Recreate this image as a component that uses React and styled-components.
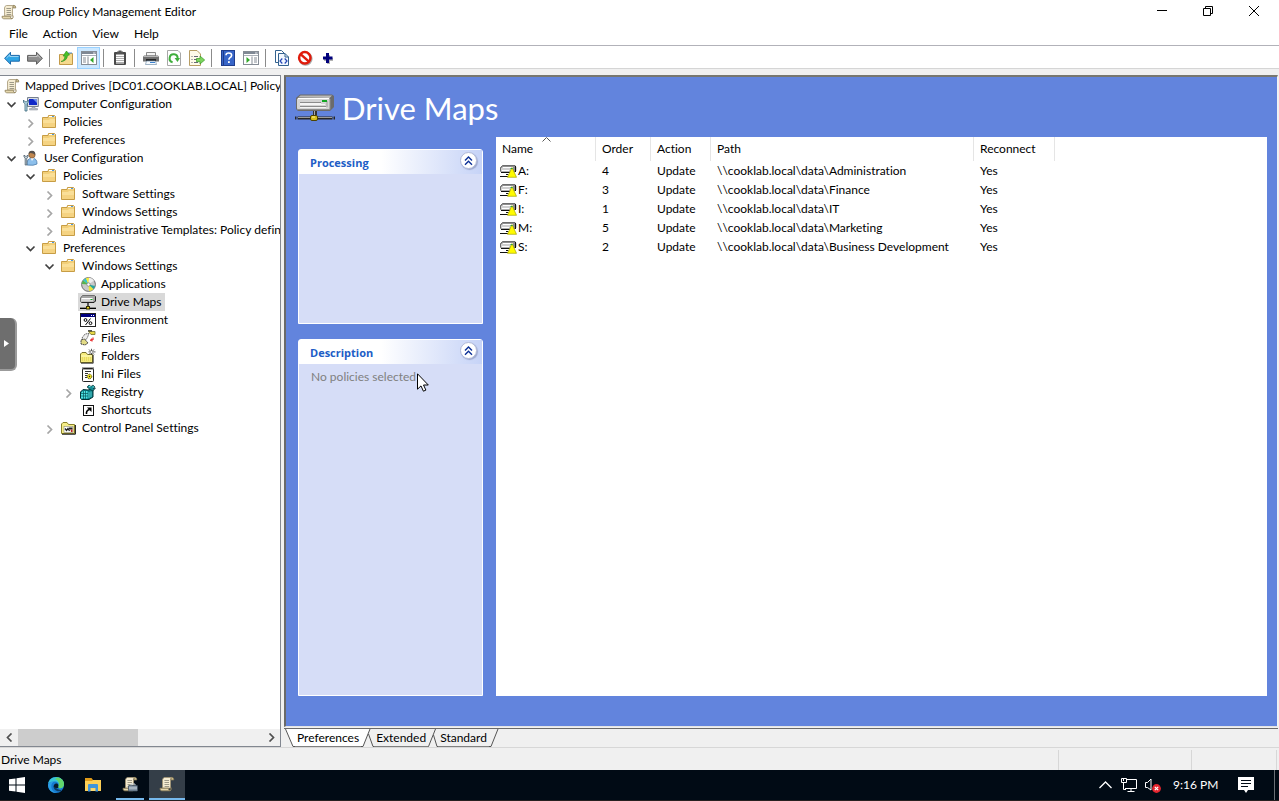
import React from "react";
import styled, { createGlobalStyle, css } from "styled-components";

const GlobalStyle = createGlobalStyle`
  *, *::before, *::after { box-sizing: border-box; }
  html, body, #root { height: 100%; margin: 0; }
  body {
    overflow: hidden;
    background: #fff;
    color: #000;
    font: 12px/18px Lato, "Open Sans", sans-serif;
    font-variant-ligatures: none;
  }
  button { font: inherit; font-variant-ligatures: none; color: inherit; border: 0; padding: 0; margin: 0; background: none; }
  svg { display: block; flex: none; }
  ul { list-style: none; margin: 0; padding: 0; }
`;

/* ---------- icons ---------- */

const Svg = ({ size = 16, w, h, box, children }) => (
  <svg width={w || size} height={h || size} viewBox={box || "0 0 16 16"} fill="none" aria-hidden="true">
    {children}
  </svg>
);

const ScrollShapes = () => (
  <>
    <path d="M5.5 1.5Q3.5 2 3.5 4L3.6 12H11.5V3.5Q11.6 2 13 1.5Z" fill="#f5ecd2" stroke="#a39674" strokeWidth=".8" />
    <path d="M12.8 1.2Q15 1.4 14.8 4H12Q12 1.4 12.8 1.2Z" fill="#cdbd8d" stroke="#877a56" strokeWidth=".7" />
    <path d="M1 12.3H9.4Q9.4 14.6 11 14.8H2.7Q.8 14.6 1 12.3Z" fill="#e5d7ad" stroke="#8f815a" strokeWidth=".8" />
    <path d="M11 14.8Q12.6 14.4 12 11.6" stroke="#9a8b62" />
    <path d="M5.4 4.5H10M5.5 6.5H10M5.5 8.5H10.2M5.6 10.5H10.2" stroke="#94917f" strokeWidth=".9" />
  </>
);
const ScrollIcon = () => <Svg><ScrollShapes /></Svg>;
const ScrollToolIcon = () => (
  <Svg>
    <ScrollShapes />
    <rect x="6.5" y="9.5" width="9" height="5.5" rx=".5" fill="#8696a6" stroke="#3e4e5e" strokeWidth=".8" />
    <path d="M9 9.3V8H13V9.3" stroke="#c9d3dc" />
    <path d="M7 12H15" stroke="#d6dfe7" strokeWidth=".8" />
  </Svg>
);
const FolderIcon = () => (
  <Svg>
    <path d="M.5 3.5V13.5H13.5V2.5H13L12.5 1.5H6.5L6 3.5Z" fill="#f2cf79" stroke="#c79d45" />
    <path d="M7 2.5H12.5" stroke="#fff" />
    <path d="M10 2.5H12" stroke="#4c97e0" />
    <path d="M1 6H7L8 5H13V13H1Z" fill="#fadf98" />
    <path d="M1 9H13V13H1Z" fill="#f5d382" />
  </Svg>
);
const ComputerIcon = () => (
  <Svg>
    <path d="M4.5 1.5H15.3V10.5H4.5Z" fill="#d9dde4" stroke="#77808e" />
    <path d="M6 3H14V9H6Z" fill="#1029c8" />
    <path d="M10 3H14V7Z" fill="#6f8fee" />
    <path d="M9 11H12V12.5H14.5V14H6.5V12.5H9Z" fill="#b8bec8" stroke="#818894" strokeWidth=".5" />
    <path d="M.5 4V6.5L2 7.5V15H4V7.5L5.3 6.5V4L3.9 5.8H2Z" fill="#bfe0ee" stroke="#396477" strokeWidth=".8" />
  </Svg>
);
const UserIcon = () => (
  <Svg>
    <path d="M4 15Q3.4 8.5 9 8Q14.3 8.4 14 14Q11 16 4 15Z" fill="#8cbfeb" stroke="#4b7ba9" strokeWidth=".8" />
    <path d="M7.5 8L9 11L11 8Z" fill="#f5f7fa" />
    <circle cx="9" cy="4.8" r="3.2" fill="#c08750" stroke="#754b27" strokeWidth=".6" />
    <path d="M5.6 4.5Q5.1 1 9 .8Q13 1 12 5Q10.6 3 8.4 3.2Q6.9 2.8 5.6 4.5Z" fill="#55504d" />
    <path d="M1 5V7L2.2 8V15H3.8V8L5 7V5L3.8 6.2H2.2Z" fill="#c8d4dc" stroke="#4b5d6b" strokeWidth=".8" />
  </Svg>
);
const DiscIcon = () => (
  <Svg>
    <circle cx="8.5" cy="8.5" r="6.9" fill="#c9c9c9" stroke="#6d6d6d" />
    <path d="M8.5 8.5L3 4.5A7 7 0 0 1 6 2.2Z" fill="#36c6c6" />
    <path d="M8.5 8.5L6 2.2A7 7 0 0 1 9 1.8Z" fill="#f7ee35" />
    <path d="M8.5 8.5L2 8A7 7 0 0 1 3 4.5Z" fill="#57b34a" />
    <path d="M8.5 8.5L13.5 13A7 7 0 0 1 9 15Z" fill="#ece635" />
    <path d="M8.5 8.5L15 10A7 7 0 0 1 13.5 13Z" fill="#26a59d" />
    <path d="M9 1.8A7 7 0 0 1 14 4.6L8.5 8.5Z" fill="#eee" />
    <circle cx="8.5" cy="8.5" r="1.7" fill="#fff" stroke="#777" strokeWidth=".7" />
  </Svg>
);
const DriveIcon = () => (
  <Svg>
    <path d="M.5 4L2.5 1.5H14.5L15.5 2.5V6.5L14 8.5H1.5L.5 7.5Z" fill="#a5a5a5" stroke="#5a5a5a" strokeWidth=".8" />
    <path d="M1 4H13V7.5H1Z" fill="#d5d5d5" />
    <path d="M2 4.5H12" stroke="#fff" />
    <path d="M1.5 8.5H14L15.5 7V2.5" stroke="#222" />
    <path d="M10.5 5.5H12.5" stroke="#16ad24" />
    <path d="M8 9V12M0 14.5H6M10 14.5H16" stroke="#000" strokeWidth="1.2" />
    <path d="M0 13.5H16" stroke="#8c8c8c" />
    <rect x="6.5" y="12.5" width="3" height="2.5" fill="#e6d21f" stroke="#332d00" />
  </Svg>
);
const DriveWarnIcon = () => (
  <Svg w={17} h={14} box="0 0 17 14">
    <path d="M.5 3.5L2.5 1.5H15L15.8 3V7L13 8.5H1.5L.5 7Z" fill="#8f8f8f" stroke="#555" strokeWidth=".8" />
    <path d="M1 4H12.5V7.5H1Z" fill="#cfcfcf" />
    <path d="M2.5 3.5H13M2 6.5H9" stroke="#fff" />
    <path d="M1 8.5H12M0 12.5H8" stroke="#111" strokeWidth="1.2" />
    <path d="M6 10.5H8.5" stroke="#111" />
    <path d="M15.5 2V8" stroke="#111" />
    <path d="M12 3.5L16.5 13.3H7.5Z" fill="#fffb00" stroke="#a8a400" strokeWidth=".7" />
    <path d="M10.5 4.5H12.5" stroke="#28a43b" />
  </Svg>
);
const EnvIcon = () => (
  <Svg>
    <rect x=".5" y="1.5" width="15" height="13" fill="#fff" stroke="#222" />
    <path d="M1 2H15V5H1Z" fill="#000080" />
    <path d="M11 3.5H12M13 3.5H14" stroke="#fff" />
    <circle cx="5.5" cy="8" r="1.4" stroke="#000" />
    <circle cx="10.5" cy="11.2" r="1.4" stroke="#000" />
    <path d="M10.5 6.5L5.5 13" stroke="#000" />
  </Svg>
);
const FilesIcon = () => (
  <Svg>
    <path d="M2 8L5 4L9 3.5L7 8.5L4 11Z" fill="#eee" stroke="#666" strokeDasharray="1.4 .6" />
    <path d="M8.5 1.5H15V4.5H11Z" fill="#e8d744" stroke="#75712b" strokeWidth=".8" />
    <path d="M8 .8H12" stroke="#111" />
    <path d="M1 10L4.5 9L8 13L5 15L1 14Z" fill="#e3dc86" stroke="#444" strokeDasharray="2 .6" />
    <path d="M13 7.5V10H10.5M10.5 10L12 8.7M10.5 10L12 11.5" stroke="#e40000" />
  </Svg>
);
const FoldersIcon = () => (
  <Svg>
    <path d="M.5 14.5V6L2 4.5H6L7.5 6.5H12.5V14.5Z" fill="#f5eb7d" stroke="#77702c" />
    <path d="M1 8H12" stroke="#fffdc4" />
    <path d="M2 10H12M2 12H12" stroke="#dacb47" strokeDasharray="1 1" />
    <path d="M1 15.2H13.2V7" stroke="#111" strokeWidth=".8" />
    <path d="M11.5 .8V7M8.5 3.9H15.5M9 1.5L14 6.5M14 1.5L9 6.5" stroke="#333" strokeWidth=".8" />
    <circle cx="11.5" cy="3.9" r="1" fill="#fff" />
  </Svg>
);
const IniIcon = () => (
  <Svg>
    <rect x="2.5" y="2.5" width="11" height="13" rx="1" fill="#fff" stroke="#222" />
    <path d="M3 1V4M5 1V4M7 1V4M9 1V4M11 1V4M13 1V4" stroke="#222" strokeWidth=".8" />
    <path d="M5 5.5H11M5 7.5H8M5 9.5H7M5 11.5H7" stroke="#333" />
    <circle cx="9.5" cy="10.5" r="2.3" fill="#eee11f" stroke="#555000" strokeDasharray="1.2 .6" />
    <circle cx="9.5" cy="10.5" r=".7" fill="#222" />
  </Svg>
);
const RegistryIcon = () => (
  <Svg>
    <path d="M.5 8L3 5.5L8 6L12 5L13 7V13L9 15.5H1.5L.5 14Z" fill="#0a7e86" stroke="#033438" />
    <path d="M1 9L3 7H7.5V14.5H1Z" fill="#4de3e3" />
    <path d="M3.5 7V15M5.5 7V15M1 9.5H8M1 12H8" stroke="#07545a" strokeWidth=".7" />
    <path d="M9 8V14M11 7.5V13" stroke="#62dada" strokeWidth=".9" />
    <path d="M7 3L9 1L11 2.5L13 1L15 3L13 4.5L15.5 4L13 7L10 5.5Z" fill="#128a93" stroke="#022" strokeWidth=".6" />
    <path d="M9 2.5H10.5M12.5 3H14" stroke="#66e5e5" />
  </Svg>
);
const ShortcutIcon = () => (
  <Svg>
    <rect x="3.5" y="3.5" width="10" height="10" fill="#fff" stroke="#111" />
    <path d="M6.5 12Q6 8.5 9.5 7.5" stroke="#000" strokeWidth="1.6" />
    <path d="M7 5.5H11.5V10Z" fill="#000" />
  </Svg>
);
const ControlPanelIcon = () => (
  <Svg>
    <path d="M.5 13.5V4L2 2.5H6L7.5 4.5H13.5V13.5Z" fill="#f5ed87" stroke="#8a822b" />
    <path d="M1 14.2H14.4V5" stroke="#111" />
    <rect x="3" y="6.5" width="9" height="6" fill="#fff" stroke="#777" strokeWidth=".5" />
    <path d="M4 8.5L5.5 10.5L7 8.5L8.5 11" stroke="#222" strokeWidth="1.3" />
    <path d="M8 7.5H11.5V9.5H8Z" fill="#222" />
    <path d="M9.5 9.5H11.5V12H10Z" fill="#c02020" />
  </Svg>
);
const LargeDrive = () => (
  <Svg w={40} h={28} box="0 0 40 28">
    <path d="M2 3L5 .5H37L39 2V13L35 17H3L1 15V4Z" fill="#6b6b6b" />
    <path d="M3 3.5L5.5 1.5H37L34.5 4Z" fill="#b9b9b9" />
    <rect x="2" y="4" width="33" height="11.5" rx="1.5" fill="#d4d4d4" />
    <path d="M3 4.5H34" stroke="#fff" />
    <path d="M2 15.5H35V5" stroke="#8d8d8d" />
    <path d="M5 8.5H26M5 12.5H31" stroke="#8c8c8c" />
    <path d="M5 9.5H26M5 13.5H31M5 10.5H30" stroke="#f5f5f5" />
    <path d="M32 7V13" stroke="#9a9a9a" />
    <rect x="27" y="6" width="5" height="2" fill="#13a625" />
    <path d="M18 17H22V21H18Z" fill="#333" />
    <path d="M19.5 17V21" stroke="#aaa" />
    <path d="M0 24H40" stroke="#262626" strokeWidth="3" strokeDasharray="1.5 1 35 1 2" />
    <path d="M3 23.5H37" stroke="#9b9b9b" />
    <rect x="15.5" y="21.5" width="7" height="5" rx="1.5" fill="#d6be1b" stroke="#4d4303" />
    <path d="M17 23H20" stroke="#fff19b" />
  </Svg>
);

const ArrowIcon = ({ fill, stroke, flip }) => (
  <Svg>
    <g transform={flip ? "matrix(-1 0 0 1 16 0)" : undefined}>
      <path d="M.6 8.3L6.5 2.2V5.4H15.4V11.2H6.5V14.3Z" fill={fill} stroke={stroke} />
      <path d="M2.5 8L5.8 4.8V6.5H14.5" stroke="#fff" strokeOpacity=".5" />
    </g>
  </Svg>
);
const UpFolderIcon = () => (
  <Svg>
    <path d="M1.5 4.5V14.5H14.5V3.5H10L9 5H6L5 4.5Z" fill="#f5d98e" stroke="#c39a48" />
    <path d="M10 3H14" stroke="#4a93d9" />
    <path d="M3 11.5Q6.5 11 7 6H5L8.5 1L11.5 5L9.5 5.5Q9 11 3 11.5Z" fill="#48c129" stroke="#258c15" strokeWidth=".6" />
  </Svg>
);
const PaneIcon = ({ right }) => (
  <Svg>
    <rect x=".5" y="1.5" width="15" height="13" fill="#fff" stroke="#858c95" />
    <path d="M1 2H15V4H1Z" fill="#7f8894" />
    <path d="M12 3H14.5" stroke="#fff" strokeWidth=".8" />
    <path d="M1 5.5H15" stroke="#aab0b8" />
    <g transform={right ? "matrix(-1 0 0 1 16 0)" : undefined}>
      <path d="M7 6.5V14M2 8H5M2 10H5M2 12H5" stroke="#858c95" />
      <path d="M12.5 7V13L9 10Z" fill="#32a82a" />
    </g>
  </Svg>
);
const ClipboardIcon = () => (
  <Svg>
    <rect x="2" y="2" width="12" height="13" rx="1" fill="#4a4a4a" />
    <rect x="4" y="4.5" width="8" height="9" fill="#fff" />
    <path d="M5 1.5H6.5V.5H9.5V1.5H11V4H5Z" fill="#555" />
    <path d="M4 6.5H12M4 8.5H12M4 10.5H12M4 12.5H12" stroke="#999" strokeWidth=".8" />
  </Svg>
);
const PrinterIcon = () => (
  <Svg>
    <path d="M3.5 2.5H12.5V6H3.5Z" fill="#f4f4f4" stroke="#8a8a8a" />
    <path d="M1 5.5H15L16 7V11.5H0V7Z" fill="#717171" />
    <path d="M1 6.5H15" stroke="#b8b8b8" />
    <path d="M3 9H13V11H3Z" fill="#262626" />
    <path d="M3.5 11H12.5L13.5 14.5H2.5Z" fill="#f7fbff" stroke="#7490ab" strokeWidth=".7" />
    <path d="M7 12.5H12" stroke="#3b82cf" />
  </Svg>
);
const RefreshIcon = () => (
  <Svg>
    <path d="M1.5 .5H12L14.5 3V15.5H1.5Z" fill="#fff" stroke="#a7a7a7" />
    <path d="M6.6 12.2A4 4 0 1 1 11.6 8.5" stroke="#3fae3c" strokeWidth="2" />
    <path d="M8.6 8H14L11.5 12Z" fill="#3fae3c" />
  </Svg>
);
const ExportIcon = () => (
  <Svg>
    <path d="M.5 .5H8L11.5 4V15.5H.5Z" fill="#fffbe9" stroke="#b79d64" />
    <path d="M2.5 6.5H3.5M5 6.5H9M2.5 9.5H3.5M5 9.5H8M2.5 12.5H3.5M5 12.5H9" stroke="#686775" />
    <path d="M7.5 8.5H11V6L15.7 10L11 14V11.7H7.5Z" fill="#7cd45e" stroke="#389a27" strokeWidth=".7" />
  </Svg>
);
const HelpIcon = () => (
  <Svg>
    <rect x="1.5" y=".5" width="13" height="15" fill="#3765c8" stroke="#203e8d" />
    <path d="M3.5 1V15" stroke="#1f3c89" />
    <path d="M6 5.2Q6 3 8.8 3Q11.7 3 11.6 5.4Q11.5 7 9.8 7.8Q8.9 8.4 8.9 9.8" stroke="#fff" strokeWidth="1.6" />
    <rect x="8" y="11.2" width="1.8" height="1.8" fill="#fff" />
  </Svg>
);
const XmlIcon = () => (
  <Svg>
    <path d="M1.5 .5H7.5L10.5 3.5V12.5H1.5Z" fill="#fff" stroke="#33628f" />
    <path d="M4.5 3.5H11L14.5 7V15.5H4.5Z" fill="#f1f7ff" stroke="#33628f" />
    <path d="M11 3.5V7H14.5" stroke="#33628f" />
    <path d="M8.3 8.5L6 11L8.3 13.5M10.7 8.5L13 11L10.7 13.5" stroke="#2446b5" strokeWidth="1.2" />
  </Svg>
);
const StopIcon = () => (
  <Svg>
    <circle cx="8.6" cy="8.7" r="5.8" stroke="#ababab" strokeWidth="2.4" />
    <circle cx="7.8" cy="7.8" r="5.7" fill="#fff" stroke="#e01b0c" strokeWidth="2.5" />
    <path d="M3.8 4.4L11.7 11.4" stroke="#e01b0c" strokeWidth="2.5" />
  </Svg>
);
const PlusIcon = () => (
  <Svg>
    <path d="M7 5H10V8H13V11H10V14H7V11H4V8H7Z" fill="#b3b3b3" />
    <path d="M6 3H9V6.5H12.5V9.5H9V13H6V9.5H3V6.5H6Z" fill="#00007c" />
  </Svg>
);
const Chevron = ({ open }) => (
  <Svg w={11} h={11} box="0 0 11 11">
    <path d={open ? "M1.5 3.5L5.5 7.5L9.5 3.5" : "M3.5 2.5L7.5 6.5L3.5 10.5"} stroke={open ? "#404040" : "#a6a6a6"} strokeWidth="1.7" />
  </Svg>
);
const WindowsIcon = () => (
  <Svg><path d="M0 2.3L6.5 1.4V7.5H0ZM7.5 1.2L16 0V7.5H7.5ZM0 8.5H6.5V14.6L0 13.7ZM7.5 8.5H16V16L7.5 14.8Z" fill="#fff" /></Svg>
);
const EdgeIcon = () => (
  <Svg>
    <circle cx="8" cy="8" r="8" fill="#167bd0" />
    <path d="M.2 6.6C1 2.8 4.2 0 8 0C12.8 0 16 3.4 16 7C16 10 13.8 11.6 11.5 11.3C10.2 11.1 9.8 10.4 10.4 9.3C11.7 6.7 9.4 4.6 6.5 4.6C3.8 4.6 1.3 5.3 .2 6.6Z" fill="#37c4d8" />
    <path d="M9.5 .2C13.6 1 16 4 16 7C16 10 13.8 11.6 11.5 11.3C10.2 11 9.8 10.4 10.4 9.3C12.2 5.8 9.5 3 7 2Z" fill="#62d56b" />
    <path d="M5.6 8.5C5 11.8 8 15 12.2 14.2L14.3 12.7C12.3 13.3 8.4 12.8 7.2 9.6Z" fill="#010b15" fillOpacity=".55" />
    <path d="M5.8 9.4C5.8 6.8 7.6 6 9 6.6C10.2 7.2 10.7 8.4 10.3 9.5Q9.8 10.3 10.6 11C8 11.4 6.9 10.5 5.8 9.4Z" fill="#071b2c" />
    <path d="M0 8C.3 5.8 3.1 4.2 6.3 4.6C4 5.5 2.8 8 3.5 11C4 13.6 6.3 15.5 8.5 16C3.8 16.2 .2 12.8 0 8Z" fill="#2b9de5" />
  </Svg>
);
const ExplorerIcon = () => (
  <Svg>
    <path d="M0 1H6.5L8 3V5H0Z" fill="#e09b19" />
    <path d="M0 4H7L8 3H16V14H0Z" fill="#fdcf56" />
    <path d="M3 14V8Q3 7 4 7H12Q13 7 13 8V14.5H10.5V11H5.5V14.5H3Z" fill="#3f95dc" />
    <path d="M6 11.5H10V14H6Z" fill="#fbd873" />
  </Svg>
);
const NetworkIcon = () => (
  <Svg>
    <path d="M5.5 2.5H15.5V11.5H4M10 11.5V14.5M6.5 14.5H13.5" stroke="#fff" />
    <path d="M.5 1.5H5.5V5.5H.5ZM2.5 2V4M2.5 5.5V12.5H5" stroke="#fff" />
  </Svg>
);
const SpeakerIcon = () => (
  <Svg>
    <path d="M.5 5.5H2.5L6 2V13L2.5 10.5H.5Z" stroke="#fff" />
    <circle cx="11.5" cy="11.5" r="4.4" fill="#e5252e" />
    <path d="M9.8 9.8L13.2 13.2M13.2 9.8L9.8 13.2" stroke="#fff" strokeWidth="1.2" />
  </Svg>
);
const NoticeIcon = () => (
  <Svg>
    <path d="M0 0H16V13H10L8 16L6 13H0Z" fill="#fff" />
    <path d="M3 3.5H13M3 6.5H13M3 9.5H10" stroke="#010b15" />
  </Svg>
);

/* ---------- window frame ---------- */

const Window = styled.div`
  display: flex;
  flex-direction: column;
  height: 100vh;
  background: #fff;
`;
const TitleBar = styled.header`
  display: flex;
  align-items: center;
  height: 23px;
  padding: 0 2px 0 1px;
`;
const WindowTitle = styled.h1`
  flex: 1;
  margin: 0;
  padding-left: 5px;
  font-size: 12px;
  font-weight: 400;
`;
const CaptionButton = styled.button`
  display: grid;
  place-items: center;
  width: 46px;
  height: 20px;
`;
const MenuBar = styled.nav`
  display: flex;
  height: 23px;
  padding: 2px 0 0 1px;
  border-bottom: 1px solid #b2b2b9;
`;
const MenuButton = styled.button`
  padding: 0 7px 0 8px;
  height: 18px;
`;
const Toolbar = styled.div`
  display: flex;
  align-items: center;
  height: 23px;
  padding-top: 1px;
  border-bottom: 1px solid #d5d5d5;
`;
const ToolButton = styled.button`
  display: grid;
  place-items: center;
  width: 23px;
  height: 22px;
  ${(p) => p.$pressed && css`
    background: #cce8ff;
    border: 1px solid #99d1ff;
  `}
`;
const Divider = styled.span`
  width: 1px;
  height: 18px;
  margin: 0 4px 0 3px;
  background: #8b8b8b;
`;

const Workspace = styled.main`
  display: flex;
  flex: 1;
  min-height: 0;
  gap: 3px;
  padding: 6px 1px 0 0;
  background: #f0f0f0;
`;

/* ---------- console tree ---------- */

const TreePane = styled.nav`
  display: flex;
  flex-direction: column;
  width: 281px;
  flex: none;
  background: #fff;
  border: 1px solid #828790;
  border-left: 0;
`;
const TreeList = styled.ul`
  flex: 1;
  padding-top: 1px;
  overflow: hidden;
`;
const TreeItem = styled.li`
  display: flex;
  height: 18px;
  padding-left: ${(p) => (p.$level ? p.$level * 19 - 16 : 2)}px;
  white-space: nowrap;
`;
const Expander = styled.button`
  display: grid;
  place-items: center;
  width: 16px;
  flex: none;
  height: 18px;
  margin-right: 2px;
`;
const TreeNode = styled.button`
  display: flex;
  align-items: center;
  gap: 5px;
  height: 18px;
  padding: 0 3px 0 2px;
  background: ${(p) => (p.$selected ? "#d9d9d9" : "transparent")};
`;
const HScroll = styled.div`
  display: flex;
  justify-content: space-between;
  height: 17px;
  background: #f0f0f0;
`;
const ScrollButton = styled.button`
  display: grid;
  place-items: center;
  width: 18px;
`;
const ScrollTrack = styled.div`
  flex: 1;
`;
const ScrollThumb = styled.div`
  width: 120px;
  height: 100%;
  background: #cdcdcd;
`;

/* ---------- result pane ---------- */

const ResultPane = styled.section`
  display: flex;
  flex-direction: column;
  flex: 1;
  min-width: 0;
`;
const Surface = styled.div`
  display: flex;
  flex-direction: column;
  flex: 1;
  min-height: 0;
  padding: 0 10px 30px 9px;
  background: #6284dd;
  border: solid #696969;
  border-width: 2px 1px 1px 2px;
  border-top-color: #777770;
  border-right-color: #f3f3f3;
  border-bottom-color: #e3e3e3;
`;
const Hero = styled.div`
  display: flex;
  align-items: center;
  height: 60px;
  gap: 7px;
  padding-top: 1px;
`;
const HeroTitle = styled.h2`
  margin: 0;
  font: 400 31px/40px Lato, "Open Sans", sans-serif;
  color: #fff;
`;
const Columns = styled.div`
  display: flex;
  flex: 1;
  min-height: 0;
  gap: 13px;
`;
const Sidebar = styled.div`
  display: flex;
  flex-direction: column;
  width: 188px;
  flex: none;
  gap: 15px;
  padding: 12px 0 0 3px;
`;
const Card = styled.section`
  flex: ${(p) => (p.$grow ? "1" : "0 0 175px")};
  background: #d6ddf7;
  border: 1px solid #fff;
  border-radius: 3px 3px 0 0;
`;
const CardHeader = styled.div`
  display: flex;
  align-items: center;
  justify-content: space-between;
  height: 24px;
  padding: 0 5px 0 11px;
  background: linear-gradient(90deg, #fff 45%, #c6d3f7);
`;
const CardTitle = styled.h3`
  margin: 0;
  padding-top: 2px;
  font: 700 11px/16px "Open Sans", sans-serif;
  color: #215dc6;
`;
const CollapseButton = styled.button`
  display: grid;
  place-items: center;
  width: 17px;
  height: 17px;
  margin-bottom: 3px;
  border-radius: 50%;
  background: #fff;
  border: 1px solid #b3bbd8;
  box-shadow: 1px 1px 1px #9da9cf;
`;
const CardText = styled.p`
  margin: 0;
  padding: 4px 12px;
  color: #808080;
`;

const ListPane = styled.div`
  flex: 1;
  min-width: 0;
  background: #fff;
`;
const Table = styled.table`
  width: 100%;
  table-layout: fixed;
  border-collapse: separate;
  border-spacing: 0;
`;
const HeadCell = styled.th`
  position: relative;
  width: ${(p) => (p.$width ? `${p.$width}px` : "auto")};
  height: 24px;
  padding: 0 0 0 6px;
  font-weight: 400;
  text-align: left;
  border-right: ${(p) => (p.$width ? "1px solid #e5e5e5" : "0")};
`;
const SortMark = styled.span`
  position: absolute;
  top: 0;
  left: 46px;
`;
const Cell = styled.td`
  height: 19px;
  padding: 0 0 0 6px;
  white-space: nowrap;
`;
const NameCell = styled(Cell)`
  padding-left: 4px;
`;
const NameContent = styled.div`
  display: flex;
  align-items: center;
  gap: 1px;
`;

const TabStrip = styled.div`
  display: flex;
  height: 19px;
  margin-top: 1px;
  border-top: 1px solid #696969;
`;
const Tab = styled.button`
  height: 18px;
  padding: 0 2px;
  background: ${(p) => (p.$active ? "#fff" : "#f0f0f0")};
  border-bottom: 1px solid #808080;
`;

/* ---------- status bar and taskbar ---------- */

const StatusBar = styled.footer`
  display: flex;
  align-items: center;
  height: 23px;
  padding: 1px 1px 0 1px;
  background: #f0f0f0;
  border-top: 1px solid #d7d7d7;
`;
const StatusText = styled.span`
  flex: 1;
`;
const StatusPart = styled.span`
  width: ${(p) => p.$width}px;
  height: 20px;
  border-left: 1px solid #d7d7d7;
`;
const Taskbar = styled.nav`
  display: flex;
  align-items: center;
  height: 31px;
  flex: none;
  background: #010b15;
  border-bottom: 1px solid #262020;
  color: #fff;
`;
const TaskButton = styled.button`
  display: grid;
  place-items: center;
  width: ${(p) => p.$width}px;
  height: 30px;
  background: ${(p) => (p.$active ? "#343e48" : "transparent")};
  border-bottom: ${(p) => (p.$running ? "2px solid #76b9ed" : "0")};
`;
const RunningGroup = styled.div`
  display: flex;
  gap: 5px;
  padding-left: 8px;
`;
const Tray = styled.div`
  display: flex;
  align-items: center;
  margin-left: auto;
  height: 100%;
`;
const TrayButton = styled.button`
  display: grid;
  place-items: center;
  width: 24px;
  height: 30px;
`;
const Clock = styled.time`
  min-width: 73px;
  padding-left: 8px;
`;
const ShowDesktop = styled.button`
  width: 5px;
  height: 30px;
  margin-left: 20px;
  border-left: 1px solid #6b7076;
`;

/* ---------- overlays ---------- */

const SideHandle = styled.button`
  position: fixed;
  left: 0;
  top: 318px;
  width: 17px;
  height: 53px;
  display: grid;
  place-items: center;
  padding-right: 2px;
  background: #6e6e6e;
  border: solid #9b9b9b;
  border-width: 0 2px 2px 0;
  border-radius: 0 6px 6px 0;
`;
const Cursor = styled.span`
  position: fixed;
  left: 417px;
  top: 373px;
  pointer-events: none;
`;

/* ---------- data ---------- */

const tree = [
  [0, null, ScrollIcon, "Mapped Drives [DC01.COOKLAB.LOCAL] Policy"],
  [1, true, ComputerIcon, "Computer Configuration"],
  [2, false, FolderIcon, "Policies"],
  [2, false, FolderIcon, "Preferences"],
  [1, true, UserIcon, "User Configuration"],
  [2, true, FolderIcon, "Policies"],
  [3, false, FolderIcon, "Software Settings"],
  [3, false, FolderIcon, "Windows Settings"],
  [3, false, FolderIcon, "Administrative Templates: Policy defin"],
  [2, true, FolderIcon, "Preferences"],
  [3, true, FolderIcon, "Windows Settings"],
  [4, null, DiscIcon, "Applications"],
  [4, null, DriveIcon, "Drive Maps"],
  [4, null, EnvIcon, "Environment"],
  [4, null, FilesIcon, "Files"],
  [4, null, FoldersIcon, "Folders"],
  [4, null, IniIcon, "Ini Files"],
  [4, false, RegistryIcon, "Registry"],
  [4, null, ShortcutIcon, "Shortcuts"],
  [3, false, ControlPanelIcon, "Control Panel Settings"],
];

const columns = [["Name", 100], ["Order", 55], ["Action", 60], ["Path", 263], ["Reconnect", 81]];

const drives = [
  ["A:", 4, "\\\\cooklab.local\\data\\Administration"],
  ["F:", 3, "\\\\cooklab.local\\data\\Finance"],
  ["I:", 1, "\\\\cooklab.local\\data\\IT"],
  ["M:", 5, "\\\\cooklab.local\\data\\Marketing"],
  ["S:", 2, "\\\\cooklab.local\\data\\Business Development"],
];

const tools = [
  ["Back", <ArrowIcon fill="#2fa5e5" stroke="#1b69ab" />],
  ["Forward", <ArrowIcon fill="#8f8f8f" stroke="#5c5c5c" flip />],
  null,
  ["Up one level", <UpFolderIcon />],
  ["Show console tree", <PaneIcon />, true],
  null,
  ["Paste", <ClipboardIcon />],
  null,
  ["Print", <PrinterIcon />],
  ["Refresh", <RefreshIcon />],
  ["Export list", <ExportIcon />],
  null,
  ["Help", <HelpIcon />],
  ["Show action pane", <PaneIcon right />],
  null,
  ["Show XML", <XmlIcon />],
  ["Stop", <StopIcon />],
  ["Add", <PlusIcon />],
];

const CollapsibleCard = ({ title, grow, children }) => (
  <Card $grow={grow}>
    <CardHeader>
      <CardTitle>{title}</CardTitle>
      <CollapseButton aria-label={`Collapse ${title}`}>
        <Svg w={9} h={10} box="0 0 9 10">
          <path d="M1 4.5L4.5 1L8 4.5M1 8.8L4.5 5.3L8 8.8" stroke="#0b2f96" strokeWidth="1.4" />
        </Svg>
      </CollapseButton>
    </CardHeader>
    {children}
  </Card>
);

const TabEdge = ({ kind }) => {
  if (kind === "first")
    return (
      <Svg w={11} h={18} box="0 0 11 18">
        <path d="M1 0H11V18H9Z" fill="#fff" />
        <path d="M1.5 0L9 17.5H11" stroke="#555" />
      </Svg>
    );
  if (kind === "last")
    return (
      <Svg w={10} h={18} box="0 0 10 18">
        <path d="M0 17.5H2L9 0" stroke="#555" />
      </Svg>
    );
  if (kind === "active")
    return (
      <Svg w={13} h={18} box="0 0 13 18">
        <path d="M0 0H9L2 18H0Z" fill="#fff" />
        <path d="M0 17.5H2L9 0M7.5 5L12 17.5H13" stroke="#555" />
      </Svg>
    );
  return (
    <Svg w={10} h={18} box="0 0 10 18">
      <path d="M0 17.5H.5L7.5 0M5.5 6L9 17.5H10" stroke="#555" />
    </Svg>
  );
};

export default function App() {
  return (
    <Window>
      <GlobalStyle />
      <TitleBar>
        <ScrollIcon />
        <WindowTitle>Group Policy Management Editor</WindowTitle>
        <CaptionButton aria-label="Minimize">
          <Svg w={11} h={11} box="0 0 11 11"><path d="M0 4.5H10" stroke="#000" /></Svg>
        </CaptionButton>
        <CaptionButton aria-label="Restore">
          <Svg w={11} h={11} box="0 0 11 11"><path d="M.5 2.5H7.5V9.5H.5ZM2.5 2V.5H9.5V7.5H8" stroke="#000" /></Svg>
        </CaptionButton>
        <CaptionButton aria-label="Close">
          <Svg w={11} h={11} box="0 0 11 11"><path d="M0 0L10 10M10 0L0 10" stroke="#000" /></Svg>
        </CaptionButton>
      </TitleBar>
      <MenuBar>
        {["File", "Action", "View", "Help"].map((m) => <MenuButton key={m}>{m}</MenuButton>)}
      </MenuBar>
      <Toolbar role="toolbar">
        {tools.map((t, i) =>
          t ? <ToolButton key={i} aria-label={t[0]} $pressed={t[2]}>{t[1]}</ToolButton> : <Divider key={i} />
        )}
      </Toolbar>

      <Workspace>
        <TreePane aria-label="Console tree">
          <TreeList>
            {tree.map(([level, open, Icon, label], i) => (
              <TreeItem key={i} $level={level}>
                {level > 0 && (open === null ? <Expander as="span" /> : (
                  <Expander aria-label={`Toggle ${label}`} aria-expanded={open}><Chevron open={open} /></Expander>
                ))}
                <TreeNode $selected={label === "Drive Maps"}><Icon />{label}</TreeNode>
              </TreeItem>
            ))}
          </TreeList>
          <HScroll>
            <ScrollButton aria-label="Scroll left">
              <Svg w={7} h={9} box="0 0 7 9"><path d="M5.5 .5L1.5 4.5L5.5 8.5" stroke="#505050" strokeWidth="1.7" /></Svg>
            </ScrollButton>
            <ScrollTrack><ScrollThumb /></ScrollTrack>
            <ScrollButton aria-label="Scroll right">
              <Svg w={7} h={9} box="0 0 7 9"><path d="M1.5 .5L5.5 4.5L1.5 8.5" stroke="#505050" strokeWidth="1.7" /></Svg>
            </ScrollButton>
          </HScroll>
        </TreePane>

        <ResultPane>
          <Surface>
            <Hero>
              <LargeDrive />
              <HeroTitle>Drive Maps</HeroTitle>
            </Hero>
            <Columns>
              <Sidebar>
                <CollapsibleCard title="Processing" />
                <CollapsibleCard title="Description" grow>
                  <CardText>No policies selected</CardText>
                </CollapsibleCard>
              </Sidebar>
              <ListPane>
                <Table>
                  <thead>
                    <tr>
                      {columns.map(([name, width], i) => (
                        <HeadCell key={name} $width={width}>
                          {name}
                          {i === 0 && (
                            <SortMark>
                              <Svg w={9} h={5} box="0 0 9 5"><path d="M.5 4.5L4.5 .5L8.5 4.5" stroke="#555" /></Svg>
                            </SortMark>
                          )}
                        </HeadCell>
                      ))}
                      <HeadCell as="td" />
                    </tr>
                  </thead>
                  <tbody>
                    {drives.map(([name, order, path]) => (
                      <tr key={name}>
                        <NameCell><NameContent><DriveWarnIcon />{name}</NameContent></NameCell>
                        <Cell>{order}</Cell>
                        <Cell>Update</Cell>
                        <Cell>{path}</Cell>
                        <Cell>Yes</Cell>
                        <Cell />
                      </tr>
                    ))}
                  </tbody>
                </Table>
              </ListPane>
            </Columns>
          </Surface>
          <TabStrip>
            <TabEdge kind="first" />
            <Tab $active>Preferences</Tab>
            <TabEdge kind="active" />
            <Tab>Extended</Tab>
            <TabEdge />
            <Tab>Standard</Tab>
            <TabEdge kind="last" />
          </TabStrip>
        </ResultPane>
      </Workspace>

      <StatusBar>
        <StatusText>Drive Maps</StatusText>
        <StatusPart $width={133} />
        <StatusPart $width={85} />
        <StatusPart $width={2} />
      </StatusBar>

      <Taskbar aria-label="Taskbar">
        <TaskButton $width={34} aria-label="Start"><WindowsIcon /></TaskButton>
        <TaskButton $width={44} aria-label="Edge"><EdgeIcon /></TaskButton>
        <TaskButton $width={30} aria-label="File Explorer"><ExplorerIcon /></TaskButton>
        <RunningGroup>
          <TaskButton $width={28} $running aria-label="Group Policy Management"><ScrollToolIcon /></TaskButton>
          <TaskButton $width={36} $running $active aria-label="Group Policy Management Editor"><ScrollIcon /></TaskButton>
        </RunningGroup>
        <Tray>
          <TrayButton aria-label="Show hidden icons">
            <Svg w={13} h={8} box="0 0 13 8"><path d="M.5 7L6.5 1L12.5 7" stroke="#fff" strokeWidth="1.3" /></Svg>
          </TrayButton>
          <TrayButton aria-label="Network"><NetworkIcon /></TrayButton>
          <TrayButton aria-label="Volume"><SpeakerIcon /></TrayButton>
          <Clock>9:16 PM</Clock>
          <NoticeIcon />
          <ShowDesktop aria-label="Show desktop" />
        </Tray>
      </Taskbar>

      <SideHandle aria-label="Open side panel">
        <Svg w={5} h={7} box="0 0 5 7"><path d="M0 0L5 3.5L0 7Z" fill="#fff" /></Svg>
      </SideHandle>
      <Cursor>
        <Svg w={12} h={19} box="0 0 12 19">
          <path d="M.5 .8V16.2L4 12.9L6.4 18.2L8.9 17.1L6.5 12H11.3Z" fill="#fff" stroke="#000" />
        </Svg>
      </Cursor>
    </Window>
  );
}
